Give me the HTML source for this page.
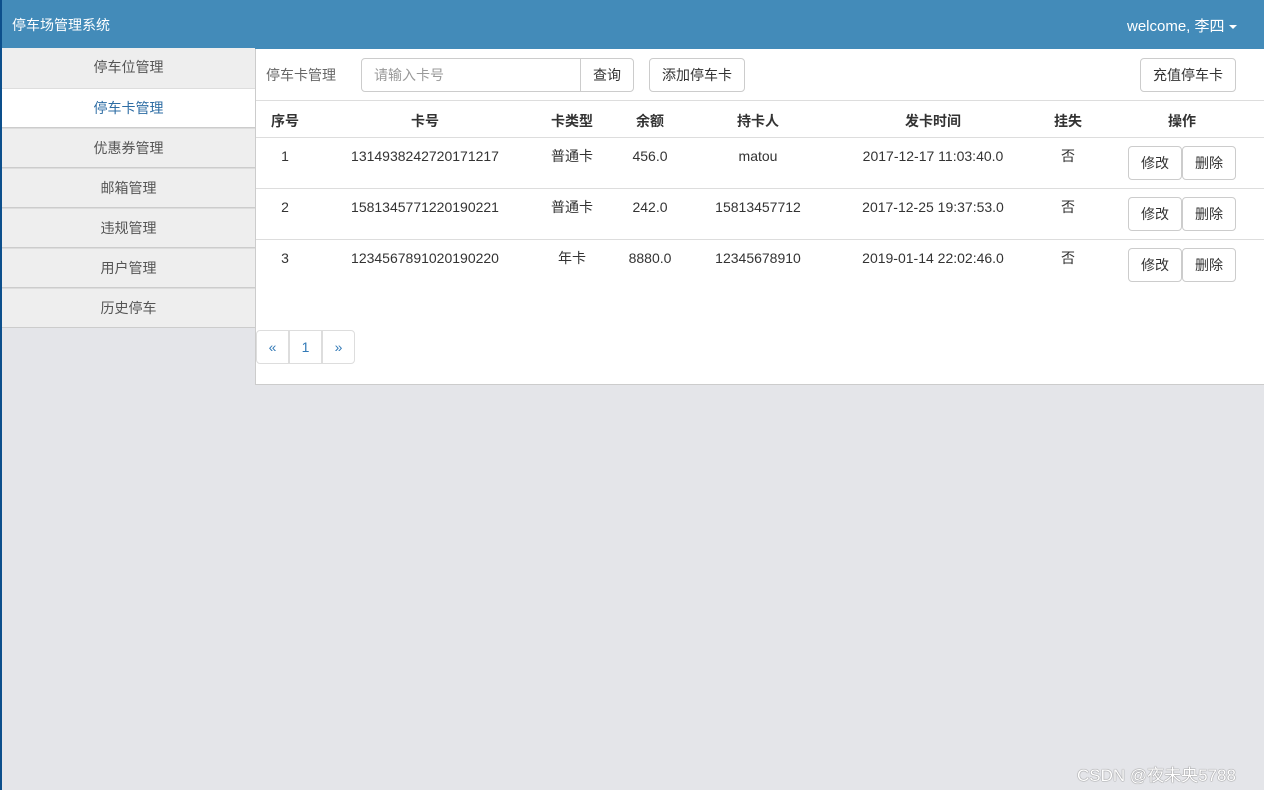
<!DOCTYPE html><html><head><meta charset="utf-8"><style>
*{margin:0;padding:0;box-sizing:border-box}
body{width:1264px;height:790px;background:#e4e5e9;font-family:"Liberation Sans","Noto Sans CJK SC",sans-serif;font-size:14px;color:#333;position:relative;overflow:hidden}
.a{position:absolute}
#hd{left:0;top:0;width:1264px;height:49px;background:#438bb9;color:#fff}
#lb{left:0;top:0;width:2px;height:790px;background:#0c4f8c}
.si{position:absolute;left:2px;width:253px;height:40px;background:#eee;border-bottom:1px solid #ccc;border-top:1px solid #ddd;text-align:center;line-height:38px;color:#555}
#pn{left:255px;top:49px;width:1009px;height:336px;background:#fff;border-left:1px solid #ccc;border-bottom:1px solid #ccc}
.btn{position:absolute;border:1px solid #ccc;border-radius:4px;background:#fff;text-align:center;color:#333}
.c{position:absolute;transform:translateX(-50%);white-space:nowrap}
.hl{position:absolute;left:0;width:1008px;height:1px;background:#ddd}
.pg{position:absolute;top:281px;width:33px;height:34px;border:1px solid #ddd;text-align:center;line-height:32px;color:#337ab7;background:#fff}
</style></head><body>
<div id="hd" class="a"><span class="a" style="left:12px;top:15px;font-size:14px">停车场管理系统</span><span class="a" style="left:1127px;top:15px;font-size:15px">welcome, 李四 <span style="display:inline-block;width:0;height:0;border-left:4px solid transparent;border-right:4px solid transparent;border-top:4px solid #fff;vertical-align:middle"></span></span></div>
<div id="lb" class="a"></div>
<div class="si" style="top:48px;border-top:0;height:41px">停车位管理</div>
<div class="si" style="top:88px;background:#fff;color:#2e6da4">停车卡管理</div>
<div class="si" style="top:128px">优惠券管理</div>
<div class="si" style="top:168px">邮箱管理</div>
<div class="si" style="top:208px">违规管理</div>
<div class="si" style="top:248px">用户管理</div>
<div class="si" style="top:288px">历史停车</div>
<div id="pn" class="a">
<span class="a" style="left:10px;top:16px;color:#666">停车卡管理</span>
<div class="btn" style="left:105px;top:9px;width:220px;height:34px;border-radius:4px 0 0 4px;text-align:left;padding-left:12px;line-height:32px;color:#999">请输入卡号</div>
<div class="btn" style="left:324px;top:9px;width:54px;height:34px;border-radius:0 4px 4px 0;line-height:32px">查询</div>
<div class="btn" style="left:393px;top:9px;width:96px;height:34px;line-height:32px">添加停车卡</div>
<div class="btn" style="left:884px;top:9px;width:96px;height:34px;line-height:32px">充值停车卡</div>
<div class="hl" style="top:51px"></div>
<div style="font-weight:bold">
<span class="c" style="left:29px;top:62px">序号</span><span class="c" style="left:169px;top:62px">卡号</span><span class="c" style="left:316px;top:62px">卡类型</span><span class="c" style="left:394px;top:62px">余额</span><span class="c" style="left:502px;top:62px">持卡人</span><span class="c" style="left:677px;top:62px">发卡时间</span><span class="c" style="left:812px;top:62px">挂失</span><span class="c" style="left:926px;top:62px">操作</span></div>
<div class="hl" style="top:88px"></div>
<div class="a" style="top:99px;left:0">
<span class="c" style="left:29px">1</span><span class="c" style="left:169px">1314938242720171217</span><span class="c" style="left:316px;top:-2px">普通卡</span><span class="c" style="left:394px">456.0</span><span class="c" style="left:502px">matou</span><span class="c" style="left:677px">2017-12-17 11:03:40.0</span><span class="c" style="left:812px;top:-2px">否</span></div>
<div class="btn" style="left:872px;top:97px;width:54px;height:34px;line-height:32px">修改</div><div class="btn" style="left:926px;top:97px;width:54px;height:34px;line-height:32px">删除</div>
<div class="hl" style="top:139px"></div>
<div class="a" style="top:150px;left:0">
<span class="c" style="left:29px">2</span><span class="c" style="left:169px">1581345771220190221</span><span class="c" style="left:316px;top:-2px">普通卡</span><span class="c" style="left:394px">242.0</span><span class="c" style="left:502px">15813457712</span><span class="c" style="left:677px">2017-12-25 19:37:53.0</span><span class="c" style="left:812px;top:-2px">否</span></div>
<div class="btn" style="left:872px;top:148px;width:54px;height:34px;line-height:32px">修改</div><div class="btn" style="left:926px;top:148px;width:54px;height:34px;line-height:32px">删除</div>
<div class="hl" style="top:190px"></div>
<div class="a" style="top:201px;left:0">
<span class="c" style="left:29px">3</span><span class="c" style="left:169px">1234567891020190220</span><span class="c" style="left:316px;top:-2px">年卡</span><span class="c" style="left:394px">8880.0</span><span class="c" style="left:502px">12345678910</span><span class="c" style="left:677px">2019-01-14 22:02:46.0</span><span class="c" style="left:812px;top:-2px">否</span></div>
<div class="btn" style="left:872px;top:199px;width:54px;height:34px;line-height:32px">修改</div><div class="btn" style="left:926px;top:199px;width:54px;height:34px;line-height:32px">删除</div>
<div class="pg" style="left:0;border-radius:4px 0 0 4px">«</div><div class="pg" style="left:33px">1</div><div class="pg" style="left:66px;border-radius:0 4px 4px 0">»</div>
</div>
<span class="a" style="left:1077px;top:761px;font-size:17px;color:#fff;text-shadow:0 0 1px #777,0 0 1px #777">CSDN @夜未央5788</span>
</body></html>
